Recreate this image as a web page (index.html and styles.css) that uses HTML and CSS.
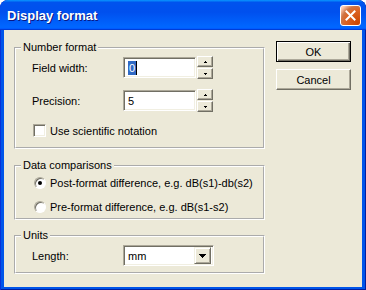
FILE: index.html
```html
<!DOCTYPE html>
<html>

<head>
  <meta charset="UTF-8">
  <title>Display format</title>
  <link rel="stylesheet" href="styles.css">
</head>

<body>
  <div class="window">
    <!-- Title bar -->
    <div class="titlebar">
      <span class="title">Display format</span>
      <span class="close">
        <svg width="21" height="21" viewBox="0 0 21 21">
          <path d="M6.5 6.5L14.5 14.5M14.5 6.5L6.5 14.5" stroke="#fff" stroke-width="2" stroke-linecap="square" />
        </svg>
      </span>
    </div>

    <div class="client">
      <div class="groups">
        <fieldset class="group number">
          <legend>Number format</legend>
          <div class="row">
            <span class="lbl">Field width:</span>
            <div class="spin">
              <div class="edit"><span class="sel">0</span><span class="caret"></span></div>
              <div class="spin-btns">
                <span class="sbtn"><svg width="3" height="2" viewBox="0 0 3 2"><path d="M1 0h1v1h1v1H0V1h1z" /></svg></span>
                <span class="sbtn"><svg width="3" height="2" viewBox="0 0 3 2"><path d="M0 0h3v1H2v1H1V1H0z" /></svg></span>
              </div>
            </div>
          </div>
          <div class="row">
            <span class="lbl">Precision:</span>
            <div class="spin">
              <div class="edit">5</div>
              <div class="spin-btns">
                <span class="sbtn"><svg width="3" height="2" viewBox="0 0 3 2"><path d="M1 0h1v1h1v1H0V1h1z" /></svg></span>
                <span class="sbtn"><svg width="3" height="2" viewBox="0 0 3 2"><path d="M0 0h3v1H2v1H1V1H0z" /></svg></span>
              </div>
            </div>
          </div>
          <div class="check-row">
            <span class="checkbox"></span>
            <span>Use scientific notation</span>
          </div>
        </fieldset>

        <fieldset class="group compare">
          <legend>Data comparisons</legend>
          <div class="radio-row">
            <span class="radio on"></span>
            <span>Post-format difference, e.g. dB(s1)-db(s2)</span>
          </div>
          <div class="radio-row">
            <span class="radio"></span>
            <span>Pre-format difference, e.g. dB(s1-s2)</span>
          </div>
        </fieldset>

        <fieldset class="group units">
          <legend>Units</legend>
          <div class="row">
            <span class="lbl">Length:</span>
            <div class="combo">
              <span class="combo-text">mm</span>
              <span class="combo-btn"><svg width="7" height="4" viewBox="0 0 7 4"><path d="M0 0h7v1H6v1H5v1H4v1H3V3H2V2H1V1H0z" /></svg></span>
            </div>
          </div>
        </fieldset>
      </div>

      <div class="buttons">
        <button class="btn default">OK</button>
        <button class="btn">Cancel</button>
      </div>
    </div>
  </div>
</body>

</html>
```

FILE: styles.css
```css
body {
  margin: 0;
  font-family: "Liberation Sans", Arial, sans-serif;
  font-size: 11px;
  color: #000;
  background: #fff;
}

.window {
  width: 366px;
  height: 290px;
  display: flex;
  flex-direction: column;
  background: #0055ea;
  border-radius: 8px 8px 0 0;
  overflow: hidden;
  box-shadow: inset 1px 0 #0831d9, inset -1px 0 #001ea0, inset 0 -1px #001ea0;
}

/* Title bar */

.titlebar {
  height: 30px;
  flex: none;
  display: flex;
  align-items: center;
  justify-content: space-between;
  padding: 0 5px 0 7px;
  background: linear-gradient(180deg, #0997ff, #0053ee 8%, #0050ee 40%, #06f 88%, #06f 93%, #005bff 95%, #003dd7 96%, #003dd7);
  border-radius: 8px 8px 0 0;
}

.title {
  color: #fff;
  font-weight: bold;
  font-size: 13px;
  text-shadow: 1px 1px #0a1883;
  margin-top: 1px;
}

.close {
  width: 21px;
  height: 21px;
  box-sizing: border-box;
  border: 1px solid #fff;
  border-radius: 3px;
  background: radial-gradient(circle at 90% 90%, #cc4600 0%, #dc6527 55%, #cd7546 70%, #ffccb2 90%);
  display: flex;
  align-items: center;
  justify-content: center;
  margin-top: 1px;
}

.close svg {
  margin: -1px;
}

/* Client area */

.client {
  flex: 1;
  margin: 0 4px 3px 4px;
  background: #ece9d8;
  display: flex;
  align-items: flex-start;
  padding: 11px 0 0 10px;
}

.groups {
  width: 251px;
  display: flex;
  flex-direction: column;
}

.group {
  margin: 0;
  min-width: 0;
  border: 2px groove #fff;
  padding: 2px 0 0 16px;
}

.group + .group {
  margin-top: 10px;
}

.group legend {
  padding: 0 2px;
  margin-left: -11px;
  line-height: 13px;
}

.number {
  padding-bottom: 10px;
}

.compare {
  padding-top: 3px;
  padding-bottom: 3px;
}

.units {
  margin-top: 9px !important;
  padding-top: 3px;
  padding-bottom: 6px;
}

.row {
  display: flex;
  align-items: center;
  height: 23px;
}

.row + .row {
  margin-top: 10px;
}

.units .row {
  height: 21px;
}

.lbl {
  width: 91px;
}

/* Spin edit */

.spin {
  display: flex;
  align-items: center;
}

.edit {
  width: 73px;
  height: 21px;
  box-sizing: border-box;
  background: #fff;
  border: 1px solid;
  border-color: #aca899 #fff #fff #aca899;
  box-shadow: inset 1px 1px #716f64, inset -1px -1px #f1efe2;
  padding: 3px 0 0 4px;
  line-height: 14px;
  display: flex;
  align-items: flex-start;
}

.sel {
  background: #316ac5;
  color: #fff;
  padding: 0 1px;
}

.caret {
  width: 1px;
  height: 14px;
  background: #000;
}

.spin-btns {
  display: flex;
  flex-direction: column;
  gap: 1px;
  margin-left: 1px;
}

.sbtn {
  width: 16px;
  height: 11px;
  box-sizing: border-box;
  background: #ece9d8;
  border: 1px solid;
  border-color: #fff #716f64 #716f64 #fff;
  box-shadow: inset -1px -1px #aca899;
  display: flex;
  align-items: center;
  justify-content: center;
}

/* Check and radio */

.check-row {
  display: flex;
  align-items: center;
  margin-top: 12px;
  height: 13px;
  padding-left: 1px;
}

.checkbox {
  width: 13px;
  height: 13px;
  box-sizing: border-box;
  background: #fff;
  border: 1px solid;
  border-color: #aca899 #fff #fff #aca899;
  box-shadow: inset 1px 1px #716f64, inset -1px -1px #f1efe2;
  margin-right: 4px;
}

.radio-row {
  display: flex;
  align-items: center;
  height: 16px;
  padding-left: 2px;
}

.radio-row + .radio-row {
  margin-top: 8px;
}

.radio {
  width: 12px;
  height: 12px;
  box-sizing: border-box;
  border-radius: 50%;
  background: #fff;
  border: 1px solid;
  border-color: #aca899 #fff #fff #aca899;
  box-shadow: inset 1px 1px #716f64;
  margin-right: 4px;
  display: flex;
  align-items: center;
  justify-content: center;
}

.radio.on::after {
  content: "";
  width: 4px;
  height: 4px;
  border-radius: 50%;
  background: #000;
}

/* Combo */

.combo {
  width: 91px;
  height: 21px;
  box-sizing: border-box;
  background: #fff;
  border: 1px solid;
  border-color: #aca899 #fff #fff #aca899;
  box-shadow: inset 1px 1px #716f64, inset -1px -1px #f1efe2;
  display: flex;
  align-items: center;
  justify-content: space-between;
  padding: 2px 2px 2px 4px;
}

.combo-btn {
  width: 17px;
  height: 17px;
  box-sizing: border-box;
  background: #ece9d8;
  border: 1px solid;
  border-color: #f1efe2 #716f64 #716f64 #f1efe2;
  box-shadow: inset 1px 1px #fff, inset -1px -1px #aca899;
  display: flex;
  align-items: center;
  justify-content: center;
}

/* Buttons */

.buttons {
  display: flex;
  flex-direction: column;
  gap: 7px;
  margin-left: 11px;
}

.btn {
  width: 75px;
  height: 21px;
  font-family: inherit;
  font-size: 11px;
  color: #000;
  background: #ece9d8;
  border: 1px solid;
  border-color: #fff #716f64 #716f64 #fff;
  box-shadow: inset -1px -1px #aca899;
  padding: 0;
}

.btn.default {
  border-color: #000;
  box-shadow: inset 1px 1px #fff, inset -1px -1px #716f64, inset -2px -2px #aca899;
}
```
